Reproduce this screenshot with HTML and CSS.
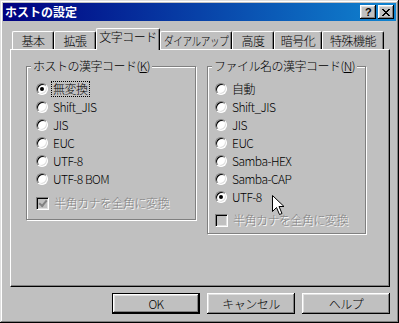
FILE: index.html
```html
<!DOCTYPE html>
<html lang="ja">
<head>
    <meta charset="UTF-8">
    <title>ホストの設定</title>
    <link rel="stylesheet" href="styles.css">
</head>
<body>
    <div class="window">
        <div class="titlebar">
            <span class="title">ホストの設定</span>
            <div class="title-buttons">
                <span class="tbtn tbtn-help">?</span>
                <span class="tbtn tbtn-close">
                    <svg width="8" height="7" viewBox="0 0 8 7">
                        <path d="M0 0h2v1h1v1h2v-1h1v-1h2v1h-1v1h-1v1h-1v1h1v1h1v1h1v1h-2v-1h-1v-1h-2v1h-1v1h-2v-1h1v-1h1v-1h1v-1h-1v-1h-1v-1h-1z" fill="#000"/>
                    </svg>
                </span>
            </div>
        </div>

        <div class="content">
            <!-- タブ -->
            <div class="tabs">
                <div class="tab tab-w42">基本</div>
                <div class="tab tab-w42">拡張</div>
                <div class="tab tab-w64 active">文字コード</div>
                <div class="tab tab-w72"><span class="squeeze">ダイアルアップ</span></div>
                <div class="tab tab-w42">高度</div>
                <div class="tab tab-w48">暗号化</div>
                <div class="tab tab-w62">特殊機能</div>
            </div>

            <div class="panel">
                <div class="group group-host">
                    <div class="group-title">ホストの漢字コード(<u>K</u>)</div>
                    <div class="options">
                        <div class="opt"><span class="radio checked"></span><span class="label focused">無変換</span></div>
                        <div class="opt"><span class="radio"></span><span class="label">Shift_JIS</span></div>
                        <div class="opt"><span class="radio"></span><span class="label">JIS</span></div>
                        <div class="opt"><span class="radio"></span><span class="label">EUC</span></div>
                        <div class="opt"><span class="radio"></span><span class="label">UTF-8</span></div>
                        <div class="opt"><span class="radio"></span><span class="label">UTF-8 BOM</span></div>
                        <div class="opt opt-check disabled"><span class="check checked"></span><span class="label">半角カナを全角に変換</span></div>
                    </div>
                </div>

                <div class="group group-file">
                    <div class="group-title">ファイル名の漢字コード(<u>N</u>)</div>
                    <div class="options">
                        <div class="opt"><span class="radio"></span><span class="label">自動</span></div>
                        <div class="opt"><span class="radio"></span><span class="label">Shift_JIS</span></div>
                        <div class="opt"><span class="radio"></span><span class="label">JIS</span></div>
                        <div class="opt"><span class="radio"></span><span class="label">EUC</span></div>
                        <div class="opt"><span class="radio"></span><span class="label">Samba-HEX</span></div>
                        <div class="opt"><span class="radio"></span><span class="label">Samba-CAP</span></div>
                        <div class="opt"><span class="radio checked"></span><span class="label">UTF-8</span></div>
                        <div class="opt opt-check disabled"><span class="check"></span><span class="label">半角カナを全角に変換</span></div>
                    </div>
                </div>
            </div>

            <div class="buttons">
                <button class="btn btn-default">OK</button>
                <button class="btn">キャンセル</button>
                <button class="btn">ヘルプ</button>
            </div>
        </div>

        <!-- マウスカーソル -->
        <svg class="cursor" width="13" height="21" viewBox="0 0 13 21">
            <path d="M0.5 0.5 L0.5 16.5 L4.5 12.5 L7.5 19.5 L10 18.5 L7 11.5 L12 11.5 Z" fill="#fff" stroke="#000" stroke-width="1"/>
        </svg>
    </div>
</body>
</html>
```

FILE: styles.css
```css
body {
    margin: 0;
    background: #c0c0c0;
    font-family: "Noto Sans CJK JP", sans-serif;
    font-size: 12px;
    font-weight: 300;
    letter-spacing: -0.5px;
    color: #000;
}

.window {
    position: relative;
    width: 399px;
    height: 323px;
    box-sizing: border-box;
    padding: 3px;
    background: #c0c0c0;
    box-shadow: inset -1px -1px #000, inset 1px 1px #dfdfdf,
                inset -2px -2px #808080, inset 2px 2px #fff;
}

.titlebar {
    display: flex;
    align-items: center;
    height: 18px;
    padding: 0 2px;
    background: linear-gradient(to right, #000080, #1084d0);
}

.title {
    color: #fff;
    font-weight: bold;
    font-size: 12px;
    line-height: 14px;
    letter-spacing: 0;
}

.title-buttons {
    display: flex;
    gap: 2px;
    margin-left: auto;
}

.tbtn {
    display: flex;
    align-items: center;
    justify-content: center;
    width: 16px;
    height: 14px;
    box-sizing: border-box;
    background: #c0c0c0;
    box-shadow: inset -1px -1px #000, inset 1px 1px #fff,
                inset -2px -2px #808080, inset 2px 2px #dfdfdf;
    font-family: "Liberation Sans", sans-serif;
    font-weight: bold;
    font-size: 11px;
    line-height: 14px;
}

.content {
    padding: 7px 6px 0 7px;
}

/* タブ */
.tabs {
    display: flex;
    align-items: flex-end;
    height: 21px;
    padding-left: 2px;
}

.tab {
    flex: none;
    display: flex;
    justify-content: center;
    height: 18px;
    box-sizing: border-box;
    padding-top: 2px;
    line-height: 14px;
    white-space: nowrap;
    border-top: 1px solid #fff;
    border-left: 1px solid #fff;
    border-right: 1px solid #000;
    border-radius: 2px 2px 0 0;
    box-shadow: inset -1px 0 #808080;
}

.tab.active {
    position: relative;
    z-index: 1;
    height: 22px;
    padding-top: 1px;
    margin-bottom: -1px;
    background: #c0c0c0;
}

/* 長いタブ名は横に詰める */
.squeeze {
    display: inline-block;
    transform: scaleX(0.8);
}

.tab-w42 { width: 42px; }
.tab-w48 { width: 48px; }
.tab-w62 { width: 62px; }
.tab-w64 { width: 64px; }
.tab-w72 { width: 72px; }

.panel {
    display: flex;
    align-items: flex-start;
    gap: 11px;
    height: 238px;
    box-sizing: border-box;
    padding: 16px 0 0 15px;
    border-top: 1px solid #fff;
    border-left: 1px solid #fff;
    border-right: 1px solid #000;
    border-bottom: 1px solid #000;
    box-shadow: inset -1px -1px #808080;
}

/* グループボックス */
.group {
    display: flex;
    flex-direction: column;
    box-sizing: border-box;
    border: 1px solid #808080;
    box-shadow: inset 1px 1px #fff, 1px 1px #fff;
}

.group-host {
    width: 170px;
    height: 154px;
}

.group-file {
    width: 159px;
    height: 168px;
}

.group-title {
    align-self: flex-start;
    margin: -8px 0 0 4px;
    padding: 0 2px;
    line-height: 14px;
    background: #c0c0c0;
    white-space: nowrap;
}

.options {
    margin-top: 7px;
    padding-left: 9px;
}

.group-file .options {
    padding-left: 7px;
}

.opt {
    display: flex;
    align-items: center;
    height: 18px;
}

.opt-check {
    margin-top: 6px;
}

.group-file .opt-check {
    margin-top: 5px;
}

.label {
    margin-left: 3px;
    padding: 0 1px;
    line-height: 14px;
    border: 1px solid transparent;
    white-space: nowrap;
}

.label.focused {
    border: 1px dotted #000;
}

.disabled .label {
    color: #808080;
    text-shadow: 1px 1px #fff;
}

.radio {
    flex: none;
    width: 12px;
    height: 12px;
    box-sizing: border-box;
    border-radius: 50%;
    border: 1px solid;
    border-color: #808080 #fff #fff #808080;
    background: #fff;
    box-shadow: inset 1px 1px #000, inset -1px -1px #dfdfdf;
    display: flex;
    align-items: center;
    justify-content: center;
}

.radio.checked::after {
    content: "";
    width: 4px;
    height: 4px;
    border-radius: 50%;
    background: #000;
}

.check {
    flex: none;
    width: 13px;
    height: 13px;
    box-sizing: border-box;
    border: 1px solid;
    border-color: #808080 #fff #fff #808080;
    background: #c0c0c0;
    box-shadow: inset 1px 1px #000, inset -1px -1px #dfdfdf;
    display: flex;
    align-items: center;
    justify-content: center;
}

.check.checked::after {
    content: "";
    width: 6px;
    height: 3px;
    margin-top: -2px;
    border-left: 2px solid #808080;
    border-bottom: 2px solid #808080;
    transform: rotate(-50deg);
}

/* ボタン */
.buttons {
    display: flex;
    justify-content: flex-end;
    gap: 7px;
    margin-top: 6px;
}

.btn {
    width: 88px;
    height: 21px;
    box-sizing: border-box;
    padding: 0;
    border: none;
    background: #c0c0c0;
    font-family: inherit;
    font-size: 12px;
    font-weight: inherit;
    letter-spacing: inherit;
    line-height: 14px;
    color: #000;
    box-shadow: inset -1px -1px #000, inset 1px 1px #fff,
                inset -2px -2px #808080, inset 2px 2px #dfdfdf;
}

.btn-default {
    border: 1px solid #000;
}

.cursor {
    position: absolute;
    left: 272px;
    top: 195px;
}
```
